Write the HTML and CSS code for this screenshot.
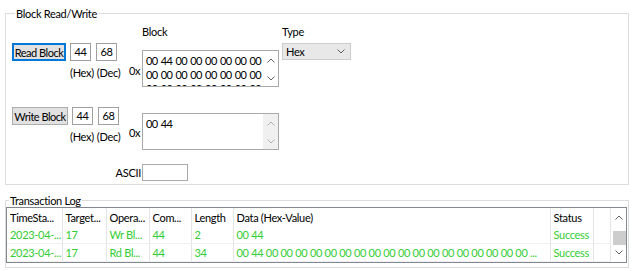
FILE: index.html
```html
<!DOCTYPE html>
<html lang="en">
<head>
    <meta charset="UTF-8">
    <meta name="viewport" content="width=device-width, initial-scale=1.0">
    <title>Block Read/Write</title>
    <link rel="stylesheet" href="styles.css">
</head>
<body>

    <fieldset class="group group-block">
        <legend>Block Read/Write</legend>

        <div class="block-row row-read">
            <div class="ctl">
                <div class="ctl-line">
                    <button class="btn btn-focus">Read Block</button>
                    <div class="num">44</div>
                    <div class="num">68</div>
                </div>
                <div class="units"><span>(Hex)</span><span>(Dec)</span></div>
            </div>
            <span class="prefix">0x</span>
            <div class="col-block">
                <div class="caption">Block</div>
                <div class="hexbox">
                    <div class="hex-text">
                        <div>00 44 00 00 00 00 00 00</div>
                        <div>00 00 00 00 00 00 00 00</div>
                        <div>00 00 00 00 00 00 00 00</div>
                    </div>
                    <div class="spin">
                        <svg width="8" height="5" viewBox="0 0 8 5"><polyline points="0.5,4.5 4,1 7.5,4.5" /></svg>
                        <svg width="8" height="5" viewBox="0 0 8 5"><polyline points="0.5,0.5 4,4 7.5,0.5" /></svg>
                    </div>
                </div>
            </div>
            <div class="col-type">
                <div class="caption">Type</div>
                <div class="select">
                    <span>Hex</span>
                    <svg width="8" height="5" viewBox="0 0 8 5"><polyline points="0.5,0.5 4,4 7.5,0.5" /></svg>
                </div>
            </div>
        </div>

        <div class="block-row row-write">
            <div class="ctl">
                <div class="ctl-line">
                    <button class="btn btn-write">Write Block</button>
                    <div class="num">44</div>
                    <div class="num">68</div>
                </div>
                <div class="units"><span>(Hex)</span><span>(Dec)</span></div>
            </div>
            <span class="prefix">0x</span>
            <div class="col-block">
                <div class="hexbox">
                    <div class="hex-text">
                        <div>00 44</div>
                    </div>
                    <div class="spin spin-off">
                        <svg width="8" height="5" viewBox="0 0 8 5"><polyline points="0.5,4.5 4,1 7.5,4.5" /></svg>
                        <svg width="8" height="5" viewBox="0 0 8 5"><polyline points="0.5,0.5 4,4 7.5,0.5" /></svg>
                    </div>
                </div>
            </div>
        </div>

        <div class="ascii-row">
            <span class="ascii-label">ASCII</span>
            <div class="ascii-box"></div>
        </div>
    </fieldset>

    <fieldset class="group group-log">
        <legend>Transaction Log</legend>
        <div class="listview">
            <table class="log">
                <colgroup>
                    <col style="width: 55px">
                    <col style="width: 44px">
                    <col style="width: 43px">
                    <col style="width: 42px">
                    <col style="width: 42px">
                    <col style="width: 317px">
                    <col style="width: 43px">
                    <col style="width: 17px">
                </colgroup>
                <thead>
                    <tr>
                        <th>TimeSta...</th>
                        <th>Target...</th>
                        <th>Opera...</th>
                        <th>Com...</th>
                        <th>Length</th>
                        <th>Data (Hex-Value)</th>
                        <th>Status</th>
                        <th></th>
                    </tr>
                </thead>
                <tbody>
                    <tr>
                        <td>2023-04-...</td>
                        <td>17</td>
                        <td>Wr Bl...</td>
                        <td>44</td>
                        <td>2</td>
                        <td>00 44</td>
                        <td>Success</td>
                        <td></td>
                    </tr>
                    <tr>
                        <td>2023-04-...</td>
                        <td>17</td>
                        <td>Rd Bl...</td>
                        <td>44</td>
                        <td>34</td>
                        <td>00 44 00 00 00 00 00 00 00 00 00 00 00 00 00 00 00 00 00 00 ...</td>
                        <td>Success</td>
                        <td></td>
                    </tr>
                </tbody>
            </table>
            <div class="vscroll">
                <svg width="8" height="5" viewBox="0 0 8 5"><polyline points="0.5,4.5 4,1 7.5,4.5" /></svg>
                <div class="thumb"></div>
                <svg width="8" height="5" viewBox="0 0 8 5"><polyline points="0.5,0.5 4,4 7.5,0.5" /></svg>
            </div>
        </div>
    </fieldset>

</body>
</html>
```

FILE: styles.css
```css
body {
    font-family: Lato, "Liberation Sans", sans-serif;
    font-size: 11px;
    line-height: 13px;
    letter-spacing: -0.3px;
    color: #000;
    background: #fff;
    margin: 0;
}
svg polyline {
    fill: none;
    stroke: #606060;
    stroke-width: 1;
}
.group {
    border: 1px solid #dcdcdc;
    margin: 0 11px 0 5px;
    min-width: 0;
}
.group legend {
    padding: 0 1px;
    margin-left: 3px;
}
.group-block {
    margin-top: 7px;
    padding: 4px 0 3px 6px;
}
.block-row {
    display: flex;
    align-items: flex-start;
}
.row-write {
    margin-top: 20px;
}
.ctl {
    width: 116px;
    flex-shrink: 0;
}
.row-read .ctl {
    margin-top: 19px;
}
.ctl-line {
    display: flex;
}
.btn {
    font: inherit;
    letter-spacing: -0.5px;
    white-space: nowrap;
    text-align: center;
    height: 18px;
    padding: 0;
    margin: 0 4px 0 0;
    background: #e1e1e1;
    border: 1px solid #adadad;
    color: #000;
}
.btn-focus {
    width: 54px;
    border: 1px solid #0078d7;
    box-shadow: inset 0 0 0 1px #0078d7;
}
.btn-write {
    width: 56px;
}
.num {
    width: 21px;
    height: 18px;
    box-sizing: border-box;
    border: 1px solid #a0a0a0;
    text-align: center;
    line-height: 16px;
}
.num + .num {
    margin-left: 5px;
}
.units {
    display: flex;
    gap: 3px;
    padding-left: 58px;
    margin-top: 5px;
}
.prefix {
    width: 14px;
    flex-shrink: 0;
    padding-left: 1px;
    box-sizing: border-box;
}
.row-read .prefix {
    margin-top: 40px;
}
.row-write .prefix {
    margin-top: 19px;
}
.col-block {
    width: 137px;
    flex-shrink: 0;
}
.caption {
    height: 13px;
    margin-top: 1px;
}
.row-read .hexbox {
    margin-top: 12px;
}
.row-write .hexbox {
    margin-top: 6px;
}
.hexbox {
    height: 37px;
    box-sizing: border-box;
    border: 1px solid #a9a9a9;
    display: flex;
    overflow: hidden;
}
.hex-text {
    flex: 1;
    padding: 3px 0 0 3px;
    line-height: 14px;
    letter-spacing: -0.6px;
    word-spacing: 1px;
    white-space: nowrap;
    overflow: hidden;
}
.spin {
    width: 15px;
    flex-shrink: 0;
    display: flex;
    flex-direction: column;
    justify-content: space-between;
    align-items: center;
    padding: 7px 0 5px;
}
.spin-off {
    background: #f0f0f0;
}
.spin-off polyline {
    stroke: #b0b0b0;
}
.col-type {
    margin-left: 3px;
}
.select {
    margin-top: 5px;
    width: 69px;
    height: 17px;
    box-sizing: border-box;
    border: 1px solid #cccccc;
    background: #e8e8e8;
    display: flex;
    justify-content: space-between;
    align-items: center;
    padding: 0 5px 0 3px;
}
.ascii-row {
    display: flex;
    margin-top: 14px;
}
.ascii-label {
    width: 130px;
    text-align: right;
    padding-right: 1px;
    box-sizing: border-box;
    line-height: 17px;
}
.ascii-box {
    width: 46px;
    height: 17px;
    box-sizing: border-box;
    border: 1px solid #a9a9a9;
}
.group-log {
    margin-top: 9px;
    padding: 0 1px 4px 0;
}
.listview {
    border: 1px solid #828790;
    display: flex;
    height: 56px;
    box-sizing: border-box;
    overflow: hidden;
}
.log {
    table-layout: fixed;
    border-collapse: collapse;
    width: 603px;
}
.log th,
.log td {
    padding: 0 0 0 3px;
    text-align: left;
    font-weight: normal;
    white-space: nowrap;
    overflow: hidden;
    border-right: 1px solid #e5e5e5;
}
.log th {
    height: 18px;
}
.log td {
    height: 16px;
    color: #32cd32;
    border-bottom: 1px solid #f0f0f0;
}
.vscroll {
    width: 17px;
    flex-shrink: 0;
    display: flex;
    flex-direction: column;
    align-items: center;
    padding-top: 7px;
}
.vscroll svg + .thumb {
    margin-top: 11px;
}
.thumb {
    width: 13px;
    height: 14px;
    background: #cdcdcd;
    margin-bottom: 5px;
}
```
